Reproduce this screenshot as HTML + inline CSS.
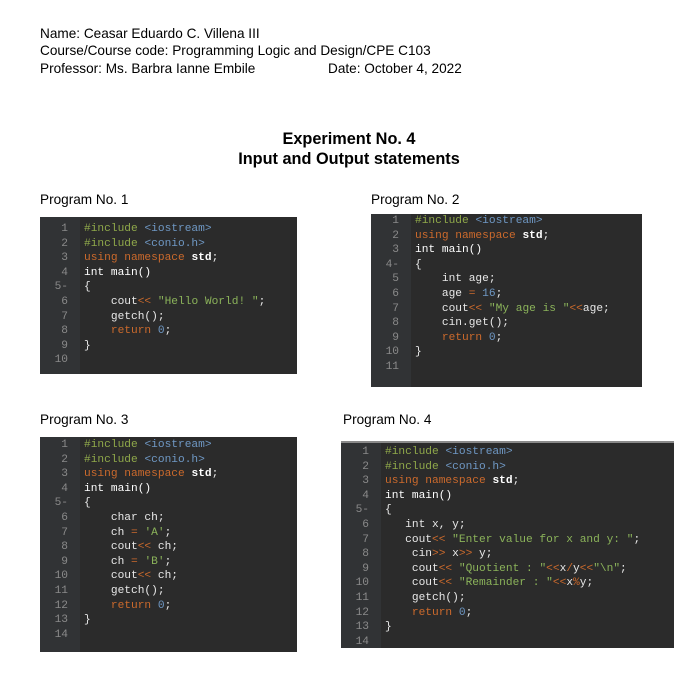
<!DOCTYPE html><html><head><style>
body{margin:0;width:698px;height:679px;background:#fff;position:relative;font-family:"Liberation Sans",sans-serif;overflow:hidden}
.t{position:absolute;font-size:13.6px;color:#000;white-space:nowrap}
.h{position:absolute;left:0;width:698px;text-align:center;font-weight:bold;font-size:16.3px}
.box{position:absolute;background:#2b2b2b;font-family:"Liberation Mono",monospace;font-size:11.2px;color:#e8e8e8;overflow:hidden}
.g{position:absolute;left:0;top:0;bottom:0;background:#313335}
.ln{position:absolute;left:0;width:100%;white-space:pre;height:14.6px;line-height:14.6px}
.n{position:absolute;left:0;width:28px;text-align:right;color:#8a8a8a}
.c{position:absolute;left:44px}
.k{color:#cc6a2c}.i{color:#8fa84a}.a{color:#6f98c4}.s{color:#8bb35a}.b{font-weight:bold;color:#fff}.w{color:#fff}
</style></head><body>
<div class="t" style="left:40px;top:26px">Name: Ceasar Eduardo C. Villena III</div>
<div class="t" style="left:40px;top:43px">Course/Course code: Programming Logic and Design/CPE C103</div>
<div class="t" style="left:40px;top:61px">Professor: Ms. Barbra Ianne Embile</div>
<div class="t" style="left:328px;top:61px">Date: October 4, 2022</div>
<div class="h" style="top:130px">Experiment No. 4</div>
<div class="h" style="top:150px">Input and Output statements</div>
<div class="t" style="left:40px;top:192px">Program No. 1</div>
<div class="t" style="left:371px;top:192px">Program No. 2</div>
<div class="t" style="left:40px;top:412px">Program No. 3</div>
<div class="t" style="left:343px;top:412px">Program No. 4</div>

<div class="box" style="left:40px;top:217px;width:257px;height:157px"><div class="g" style="width:40px"></div>
<div style="position:absolute;left:0;right:0;top:-2px">
<div class="ln" style="top:7px"><span class="n">1</span><span class="c"><span class="i">#include</span> <span class="a">&lt;iostream&gt;</span></span></div>
<div class="ln" style="top:21.6px"><span class="n">2</span><span class="c"><span class="i">#include</span> <span class="a">&lt;conio.h&gt;</span></span></div>
<div class="ln" style="top:36.2px"><span class="n">3</span><span class="c"><span class="k">using namespace</span> <span class="b">std</span>;</span></div>
<div class="ln" style="top:50.8px"><span class="n">4</span><span class="c"><span class="w">int main()</span></span></div>
<div class="ln" style="top:65.4px"><span class="n">5-</span><span class="c">{</span></div>
<div class="ln" style="top:80px"><span class="n">6</span><span class="c">    cout<span class="k">&lt;&lt;</span> <span class="s">"Hello World! "</span>;</span></div>
<div class="ln" style="top:94.6px"><span class="n">7</span><span class="c">    getch();</span></div>
<div class="ln" style="top:109.2px"><span class="n">8</span><span class="c">    <span class="k">return</span> <span class="a">0</span>;</span></div>
<div class="ln" style="top:123.8px"><span class="n">9</span><span class="c">}</span></div>
<div class="ln" style="top:138.4px"><span class="n">10</span></div>
</div></div>

<div class="box" style="left:371px;top:214px;width:271px;height:173px"><div class="g" style="width:40px"></div>
<div style="position:absolute;left:0;right:0;top:-7px">
<div class="ln" style="top:7px"><span class="n">1</span><span class="c"><span class="i">#include</span> <span class="a">&lt;iostream&gt;</span></span></div>
<div class="ln" style="top:21.6px"><span class="n">2</span><span class="c"><span class="k">using namespace</span> <span class="b">std</span>;</span></div>
<div class="ln" style="top:36.2px"><span class="n">3</span><span class="c"><span class="w">int main()</span></span></div>
<div class="ln" style="top:50.8px"><span class="n">4-</span><span class="c">{</span></div>
<div class="ln" style="top:65.4px"><span class="n">5</span><span class="c">    int age;</span></div>
<div class="ln" style="top:80px"><span class="n">6</span><span class="c">    age <span class="k">=</span> <span class="a">16</span>;</span></div>
<div class="ln" style="top:94.6px"><span class="n">7</span><span class="c">    cout<span class="k">&lt;&lt;</span> <span class="s">"My age is "</span><span class="k">&lt;&lt;</span>age;</span></div>
<div class="ln" style="top:109.2px"><span class="n">8</span><span class="c">    cin.get();</span></div>
<div class="ln" style="top:123.8px"><span class="n">9</span><span class="c">    <span class="k">return</span> <span class="a">0</span>;</span></div>
<div class="ln" style="top:138.4px"><span class="n">10</span><span class="c">}</span></div>
<div class="ln" style="top:153px"><span class="n">11</span></div>
</div></div>

<div class="box" style="left:40px;top:437px;width:257px;height:215px"><div class="g" style="width:40px"></div>
<div style="position:absolute;left:0;right:0;top:-6px">
<div class="ln" style="top:7px"><span class="n">1</span><span class="c"><span class="i">#include</span> <span class="a">&lt;iostream&gt;</span></span></div>
<div class="ln" style="top:21.6px"><span class="n">2</span><span class="c"><span class="i">#include</span> <span class="a">&lt;conio.h&gt;</span></span></div>
<div class="ln" style="top:36.2px"><span class="n">3</span><span class="c"><span class="k">using namespace</span> <span class="b">std</span>;</span></div>
<div class="ln" style="top:50.8px"><span class="n">4</span><span class="c"><span class="w">int main()</span></span></div>
<div class="ln" style="top:65.4px"><span class="n">5-</span><span class="c">{</span></div>
<div class="ln" style="top:80px"><span class="n">6</span><span class="c">    char ch;</span></div>
<div class="ln" style="top:94.6px"><span class="n">7</span><span class="c">    ch <span class="k">=</span> <span class="s">'A'</span>;</span></div>
<div class="ln" style="top:109.2px"><span class="n">8</span><span class="c">    cout<span class="k">&lt;&lt;</span> ch;</span></div>
<div class="ln" style="top:123.8px"><span class="n">9</span><span class="c">    ch <span class="k">=</span> <span class="s">'B'</span>;</span></div>
<div class="ln" style="top:138.4px"><span class="n">10</span><span class="c">    cout<span class="k">&lt;&lt;</span> ch;</span></div>
<div class="ln" style="top:153px"><span class="n">11</span><span class="c">    getch();</span></div>
<div class="ln" style="top:167.6px"><span class="n">12</span><span class="c">    <span class="k">return</span> <span class="a">0</span>;</span></div>
<div class="ln" style="top:182.2px"><span class="n">13</span><span class="c">}</span></div>
<div class="ln" style="top:196.8px"><span class="n">14</span></div>
</div></div>

<div class="box" style="left:341px;top:441px;width:333px;height:207px;border-top:2px solid #8a8a8a;box-sizing:border-box"><div class="g" style="width:40px"></div>
<div style="position:absolute;left:0;right:0;top:-5px">
<div class="ln" style="top:7px"><span class="n">1</span><span class="c"><span class="i">#include</span> <span class="a">&lt;iostream&gt;</span></span></div>
<div class="ln" style="top:21.6px"><span class="n">2</span><span class="c"><span class="i">#include</span> <span class="a">&lt;conio.h&gt;</span></span></div>
<div class="ln" style="top:36.2px"><span class="n">3</span><span class="c"><span class="k">using namespace</span> <span class="b">std</span>;</span></div>
<div class="ln" style="top:50.8px"><span class="n">4</span><span class="c"><span class="w">int main()</span></span></div>
<div class="ln" style="top:65.4px"><span class="n">5-</span><span class="c">{</span></div>
<div class="ln" style="top:80px"><span class="n">6</span><span class="c">   int x, y;</span></div>
<div class="ln" style="top:94.6px"><span class="n">7</span><span class="c">   cout<span class="k">&lt;&lt;</span> <span class="s">"Enter value for x and y: "</span>;</span></div>
<div class="ln" style="top:109.2px"><span class="n">8</span><span class="c">    cin<span class="k">&gt;&gt;</span> x<span class="k">&gt;&gt;</span> y;</span></div>
<div class="ln" style="top:123.8px"><span class="n">9</span><span class="c">    cout<span class="k">&lt;&lt;</span> <span class="s">"Quotient : "</span><span class="k">&lt;&lt;</span>x<span class="k">/</span>y<span class="k">&lt;&lt;</span><span class="s">"\n"</span>;</span></div>
<div class="ln" style="top:138.4px"><span class="n">10</span><span class="c">    cout<span class="k">&lt;&lt;</span> <span class="s">"Remainder : "</span><span class="k">&lt;&lt;</span>x<span class="k">%</span>y;</span></div>
<div class="ln" style="top:153px"><span class="n">11</span><span class="c">    getch();</span></div>
<div class="ln" style="top:167.6px"><span class="n">12</span><span class="c">    <span class="k">return</span> <span class="a">0</span>;</span></div>
<div class="ln" style="top:182.2px"><span class="n">13</span><span class="c">}</span></div>
<div class="ln" style="top:196.8px"><span class="n">14</span></div>
</div></div>
</body></html>
